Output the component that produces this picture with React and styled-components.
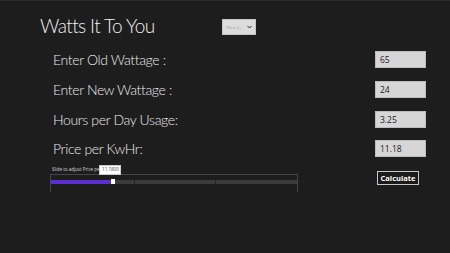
import React, { useState } from 'react'
import styled, { createGlobalStyle } from 'styled-components'

const GlobalStyle = createGlobalStyle`
    html, body {
        margin:0;
        padding:0;
        background:#1d1d1d;
    }
    * { box-sizing:border-box; }
`

const fields = [
    { name: 'oldWattage', label: 'Enter Old Wattage :', value: '65' },
    { name: 'newWattage', label: 'Enter New Wattage :', value: '24' },
    { name: 'hours', label: 'Hours per Day Usage:', value: '3.25' },
    { name: 'price', label: 'Price per KwHr:', value: '11.18' }
]

function App() {
    const [values, setValues] = useState(
        fields.reduce((acc, f) => ({ ...acc, [f.name]: f.value }), {})
    )
    const onChange = (e) => {
        setValues({ ...values, [e.target.name]: e.target.value })
    }
    // price slider shown as a percentage of its range
    const sliderPct = 24.5

    return (
        <Page>
            <GlobalStyle />
            <Header>
                <Title>Watts It To You</Title>
                <Dropdown>
                    <span>What it...</span>
                    <Chevron viewBox='0 0 10 6'>
                        <path d='M1 1 L5 5 L9 1' fill='none' stroke='#222' strokeWidth='2' />
                    </Chevron>
                </Dropdown>
            </Header>
            <Form>
                {fields.map((f) => (
                    <Row key={f.name}>
                        <Label>{f.label}</Label>
                        <Input type='text' name={f.name} value={values[f.name]} onChange={onChange} />
                    </Row>
                ))}
            </Form>
            <Footer>
                <SliderBlock>
                    <SliderCaption>
                        Slide to adjust Price per
                        <Tooltip>11.1800</Tooltip>
                    </SliderCaption>
                    <SliderFrame>
                        <Track>
                            <Fill style={{ width: sliderPct + '%' }} />
                            <Thumb />
                            <Rest />
                        </Track>
                    </SliderFrame>
                </SliderBlock>
                <Button type='button'>Calculate</Button>
            </Footer>
        </Page>
    )
}

export default App

const Page = styled.div`
    width:450px;
    height:253px;
    background:#1d1d1d;
    border-top:1px solid #2c2c2c;
    font-family:Lato, "Open Sans", sans-serif;
    color:#ececec;
    overflow:hidden;
`

const Header = styled.div`
    display:flex;
    align-items:flex-start;
    padding:13px 0 0 40px;
    height:42px;
`

const Title = styled.h1`
    margin:0;
    font-size:19px;
    line-height:24px;
    font-weight:300;
    letter-spacing:-0.6px;
    width:182px;
    color:#f0f0f0;
`

const Dropdown = styled.div`
    display:flex;
    align-items:center;
    justify-content:space-between;
    width:34px;
    height:16px;
    padding:0 3px 0 3px;
    background:#dcdcdc;
    border:1px solid #c4c4c4;
    margin-top:5px;
    span{
        font-size:4px;
        color:#a8a8a8;
    }
`

const Chevron = styled.svg`
    width:5px;
    height:4px;
`

const Form = styled.div`
    display:flex;
    flex-direction:column;
    padding:2px 0 0 53px;
`

const Row = styled.div`
    display:grid;
    grid-template-columns:322px 51px;
    align-items:center;
    height:29.7px;
`

const Label = styled.label`
    font-size:14px;
    font-weight:300;
    letter-spacing:-0.35px;
    color:#ececec;
`

const Input = styled.input`
    width:51px;
    height:17px;
    padding:0 4px;
    background:#d6d6d6;
    border:1px solid #bcbcbc;
    font-family:"Open Sans", sans-serif;
    font-size:8.5px;
    color:#1c1c1c;
    outline:none;
`

const Footer = styled.div`
    display:flex;
    align-items:flex-start;
    padding:1px 0 0 50px;
`

const SliderBlock = styled.div`
    display:flex;
    flex-direction:column;
    width:248px;
`

const SliderCaption = styled.div`
    display:flex;
    align-items:flex-start;
    height:9px;
    padding-left:2px;
    font-family:"Open Sans", sans-serif;
    font-size:4.5px;
    line-height:9px;
    color:#d8d8d8;
`

const Tooltip = styled.span`
    display:inline-flex;
    align-items:center;
    justify-content:center;
    width:22px;
    height:10px;
    margin-left:-2px;
    background:#fff;
    color:#333;
    font-size:4.5px;
    border:1px solid #ccc;
    position:relative;
    z-index:1;
`

const SliderFrame = styled.div`
    height:18px;
    border:1px solid #454545;
    border-bottom:none;
    padding-top:5px;
`

const Track = styled.div`
    display:flex;
    align-items:center;
    height:4px;
`

const Fill = styled.div`
    height:4px;
    background:#5b2ed1;
`

const Thumb = styled.div`
    width:4px;
    height:5px;
    background:#fff;
`

const Rest = styled.div`
    flex:1;
    height:4px;
    background:linear-gradient(to right,
        #3b3b3b 0, #3b3b3b 19px, #262626 19px, #262626 20px,
        #3b3b3b 20px, #3b3b3b 100px, #262626 100px, #262626 101px,
        #3b3b3b 101px);
`

const Button = styled.button`
    margin:6px 0 0 79px;
    width:42px;
    height:14px;
    padding:0;
    background:#1b1b1b;
    border:1px solid #c9c9c9;
    color:#fff;
    font-family:"Open Sans", sans-serif;
    font-weight:700;
    font-size:7.5px;
`
